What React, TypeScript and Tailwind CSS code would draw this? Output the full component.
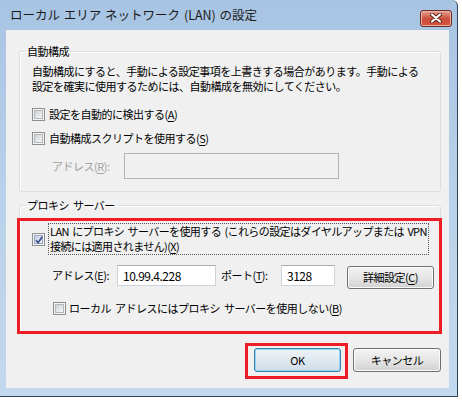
import type { ReactNode } from 'react'

const font = "font-['Noto_Sans_CJK_JP','Noto_Sans_CJK_SC',sans-serif]"

function Key({ k }: { k: string }) {
  return <span className="underline underline-offset-[2px]">{k}</span>
}

function CheckBox({ checked }: { checked?: boolean }) {
  return (
    <span className="relative flex h-[13px] w-[13px] shrink-0 border border-[#8e8f8f] bg-[#f4f4f4] p-[1px]">
      <span
        className={
          checked
            ? 'flex-1 border border-[#9aa6c4] bg-gradient-to-br from-[#c5cde2] to-[#eef1f8]'
            : 'flex-1 border border-[#b3b6ba] bg-gradient-to-br from-[#cfd1d4] to-[#f7f7f7]'
        }
      />
      {checked && (
        <svg className="absolute left-[1px] top-[1px]" width="10" height="10" viewBox="0 0 10 10">
          <path d="M2 5.2 L4.2 7.6 L8.2 1.8" fill="none" stroke="#3a4c8a" strokeWidth="1.6" />
        </svg>
      )}
    </span>
  )
}

function TextBox({ value, disabled, className }: { value?: string; disabled?: boolean; className: string }) {
  return (
    <div
      className={`${className} flex items-center border pl-[5px] text-[12px] leading-none ${
        disabled ? 'border-[#b0b4b8] bg-[#f0f0f0]' : 'border-[#cfd3d9] border-t-[#abadb3] bg-white'
      }`}
    >
      {value}
    </div>
  )
}

function Button({ children, def, className }: { children: ReactNode; def?: boolean; className: string }) {
  return (
    <div
      className={`${className} flex items-center justify-center rounded-[3px] border text-[11px] ${
        def
          ? 'border-[#3c7fb1] bg-gradient-to-b from-[#eef3f7] via-[#e0e9f0] to-[#cfdde9] shadow-[inset_0_0_0_1px_#8fd6f5]'
          : 'border-[#707070] bg-gradient-to-b from-[#f3f3f3] via-[#e6e6e6] to-[#d2d2d2] shadow-[inset_0_0_0_1px_#fbfbfb]'
      }`}
    >
      {children}
    </div>
  )
}

function CloseButton() {
  return (
    <div className="ml-auto mt-[6px] flex h-[17px] w-[32px] items-center justify-center rounded-[3px] border border-[#6a2a22] bg-gradient-to-b from-[#e6a294] via-[#c9503f] to-[#d6503a] shadow-[inset_0_0_0_1px_#eab3a8]">
      <svg width="12" height="10" viewBox="0 0 12 10">
        <path d="M2 1.5 L10 8.5 M10 1.5 L2 8.5" stroke="#5a2018" strokeWidth="4" strokeLinecap="round" />
        <path d="M2 1.5 L10 8.5 M10 1.5 L2 8.5" stroke="#ffffff" strokeWidth="2.2" strokeLinecap="round" />
      </svg>
    </div>
  )
}

export default function App() {
  return (
    <div className={`h-[400px] w-[462px] overflow-hidden bg-white text-black ${font}`}>
      <div className="flex h-[397px] w-[458px] flex-col rounded-tr-[6px] border-b border-r border-[#2f4256] bg-gradient-to-b from-[#a7c4e3] via-[#b9d1ea] to-[#c2d8ee]">
        {/* title bar */}
        <div className="flex h-[30px] shrink-0 items-center pl-[10px] pr-[5px]">
          <span className="text-[12.5px] text-[#1a1a1a] [word-spacing:1px]">ローカル エリア ネットワーク (LAN) の設定</span>
          <CloseButton />
        </div>

        {/* client area */}
        <div className="relative ml-[6px] flex h-[358px] w-[443px] flex-col bg-[#f0f0f0] text-[11px] leading-[15px] tracking-[-0.5px] [word-spacing:2px]">
          <fieldset className="ml-[13px] mt-[14px] w-[422px] rounded-[3px] border border-[#d5dfe5] p-0 pb-[12px] shadow-[inset_1px_1px_0_#ffffff]">
            <legend className="ml-[6px] px-[1px]">自動構成</legend>
            <div className="pl-[12px]">
              <p className="mt-[5px] whitespace-nowrap">
                自動構成にすると、手動による設定事項を上書きする場合があります。手動による
                <br />
                設定を確実に使用するためには、自動構成を無効にしてください。
              </p>
              <div className="mt-[10px] flex h-[20px] items-center gap-[4px]">
                <CheckBox />
                <span>
                  設定を自動的に検出する(<Key k="A" />)
                </span>
              </div>
              <div className="mt-[4px] flex h-[20px] items-center gap-[4px]">
                <CheckBox />
                <span>
                  自動構成スクリプトを使用する(<Key k="S" />)
                </span>
              </div>
              <div className="mt-[5px] flex h-[26px] items-center pl-[20px]">
                <span className="w-[72px] text-[#a0a0a0]">
                  アドレス(<Key k="R" />):
                </span>
                <TextBox disabled className="h-[26px] w-[215px]" />
              </div>
            </div>
          </fieldset>

          <fieldset className="ml-[13px] mt-[6px] w-[422px] rounded-[3px] border border-[#d5dfe5] p-0 pb-[14px] shadow-[inset_1px_1px_0_#ffffff]">
            <legend className="ml-[6px] px-[1px]">プロキシ サーバー</legend>
            <div className="pl-[12px]">
              <div className="mt-[10px] flex items-start gap-[3px]">
                <span className="mt-[10px]">
                  <CheckBox checked />
                </span>
                <div className="w-[381px] whitespace-nowrap border border-dotted border-[#555] pl-[1px] tracking-[-0.6px] [word-spacing:1.5px]">
                  LAN にプロキシ サーバーを使用する (これらの設定はダイヤルアップまたは VPN
                  <br />
                  接続には適用されません)(<Key k="X" />)
                </div>
              </div>
              <div className="mt-[10px] flex h-[24px] items-start pl-[20px]">
                <span className="flex h-[21px] w-[65px] items-center">
                  アドレス(<Key k="E" />):
                </span>
                <TextBox value="10.99.4.228" className="h-[21px] w-[99px]" />
                <span className="ml-[5px] flex h-[21px] w-[60px] items-center">
                  ポート(<Key k="T" />):
                </span>
                <TextBox value="3128" className="h-[21px] w-[54px]" />
                <Button className="ml-[12px] mt-[1px] h-[23px] w-[87px]">
                  <span>
                    詳細設定(<Key k="C" />)
                  </span>
                </Button>
              </div>
              <div className="mt-[9px] flex h-[20px] items-center gap-[3px] pl-[21px]">
                <CheckBox />
                <span>
                  ローカル アドレスにはプロキシ サーバーを使用しない(<Key k="B" />)
                </span>
              </div>
            </div>
          </fieldset>

          <div className="mt-[15px] flex justify-end gap-[12px] pr-[8px]">
            <Button def className="h-[24px] w-[87px]">
              OK
            </Button>
            <Button className="h-[24px] w-[88px]">キャンセル</Button>
          </div>

          {/* red annotation frames */}
          <div className="absolute left-[11px] top-[188px] h-[116px] w-[425px] border-[3px] border-[#ee1c24]" />
          <div className="absolute left-[239px] top-[313px] h-[36px] w-[103px] border-[3px] border-[#ee1c24]" />
        </div>
      </div>
    </div>
  )
}
